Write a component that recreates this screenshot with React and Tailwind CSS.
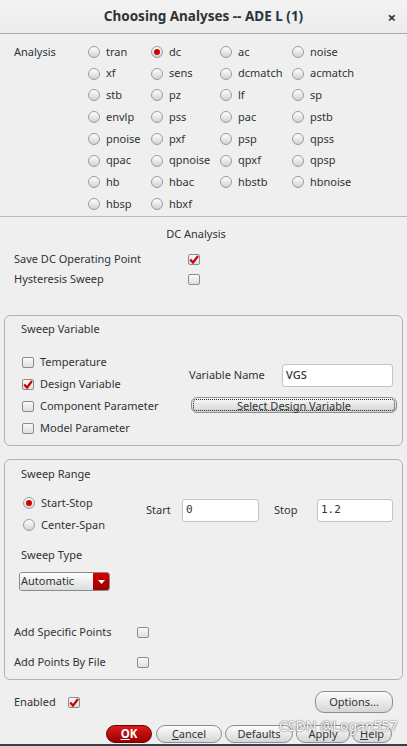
import React from 'react';

const analyses = [
  ['tran', 'dc', 'ac', 'noise'],
  ['xf', 'sens', 'dcmatch', 'acmatch'],
  ['stb', 'pz', 'lf', 'sp'],
  ['envlp', 'pss', 'pac', 'pstb'],
  ['pnoise', 'pxf', 'psp', 'qpss'],
  ['qpac', 'qpnoise', 'qpxf', 'qpsp'],
  ['hb', 'hbac', 'hbstb', 'hbnoise'],
  ['hbsp', 'hbxf', null, null],
];

const Radio = ({ checked }) => (
  <span className="w-[12px] h-[12px] rounded-full border border-[#9c9c9c] bg-linear-to-b from-white to-[#d2d2d2] flex items-center justify-center shrink-0">
    {checked && <span className="w-[6px] h-[6px] rounded-full bg-[#d40000]" />}
  </span>
);

const Check = ({ checked }) => (
  <span className="w-[12px] h-[11px] rounded-[2px] border border-[#8c8c8c] bg-linear-to-b from-[#fafafa] to-[#dedede] flex items-center justify-center shrink-0">
    {checked && (
      <svg width="10" height="9" viewBox="0 0 10 9">
        <path d="M1.2 4.6 L4 7.6 L9 1" fill="none" stroke="#cc0000" strokeWidth="2.2" />
      </svg>
    )}
  </span>
);

const Btn = ({ children, className = '' }) => (
  <div className={'flex items-center justify-center rounded-[9px] border border-[#8e8e8e] bg-linear-to-b from-[#fdfdfd] to-[#d6d6d6] text-[11px] text-[#2e3436] ' + className}>
    {children}
  </div>
);

const Field = ({ value, className = '', mono }) => (
  <div className={'h-[23px] bg-white border border-[#c4c4c4] rounded-[3px] flex items-center px-[3px] ' + (mono ? "font-['DejaVu_Sans_Mono',monospace] text-[11px] " : 'font-medium ') + className}>
    {value}
  </div>
);

export default function App() {
  return (
    <div className="w-[407px] h-[746px] bg-[#efefef] flex flex-col text-[11px] text-[#2e3436] overflow-hidden relative font-['Noto_Sans',sans-serif]">
      {/* title bar */}
      <div className="h-[34px] shrink-0 border-b border-[#adadad] bg-linear-to-b from-[#f4f4f4] to-[#ebebeb] flex items-center justify-center relative">
        <span className="text-[13.5px] font-bold text-[#2e3436]">Choosing Analyses -- ADE L (1)</span>
        <span className="absolute right-[11px] top-[6px] text-[15px] font-bold">×</span>
      </div>

      {/* analysis grid */}
      <div className="flex pt-[7px] pb-px">
        <div className="w-[88px] pl-[14px] h-[21.75px] flex items-center shrink-0">Analysis</div>
        <div className="grid grid-cols-[63px_69px_72px_1fr]">
          {analyses.flat().map((a, i) => (
            <div key={i} className="h-[21.75px] flex items-center gap-[6px]">
              {a && (
                <>
                  <Radio checked={a === 'dc'} />
                  <span>{a}</span>
                </>
              )}
            </div>
          ))}
        </div>
      </div>
      <div className="h-px bg-[#b9b9b9] shrink-0" />

      {/* DC analysis */}
      <div className="mt-[7px] h-[20px] flex items-center justify-center pr-[15px]">DC Analysis</div>
      <div className="mt-[5px] h-[20px] flex items-center pl-[14px]">
        <span className="w-[174px]">Save DC Operating Point</span>
        <Check checked />
      </div>
      <div className="h-[20px] flex items-center pl-[14px]">
        <span className="w-[174px]">Hysteresis Sweep</span>
        <Check />
      </div>

      {/* sweep variable */}
      <div className="mt-[26px] mx-[4px] h-[131px] shrink-0 border border-[#b3b3b3] rounded-[6px] flex flex-col">
        <div className="mt-[3px] h-[20px] flex items-center pl-[16px]">Sweep Variable</div>
        <div className="mt-[12px] flex">
          <div className="w-[184px] pl-[17px] flex flex-col">
            {[
              ['Temperature', false],
              ['Design Variable', true],
              ['Component Parameter', false],
              ['Model Parameter', false],
            ].map(([t, c]) => (
              <div key={t} className="h-[22px] flex items-center gap-[6px]">
                <Check checked={c} />
                <span>{t}</span>
              </div>
            ))}
          </div>
          <div className="pt-[13px] flex flex-col">
            <div className="flex items-center h-[23px]">
              <span className="w-[93px]">Variable Name</span>
              <Field value="VGS" className="w-[111px]" />
            </div>
            <div className="mt-[10px] ml-[2px] w-[206px] h-[16px] rounded-[6px] border border-[#8e8e8e] bg-linear-to-b from-[#fbfbfb] to-[#d3d3d3] p-px">
              <div className="w-full h-full border border-dotted border-[#222] rounded-[3px] flex items-center justify-center leading-none">
                Select Design Variable
              </div>
            </div>
          </div>
        </div>
      </div>

      {/* sweep range */}
      <div className="mt-[13px] mx-[4px] h-[221px] shrink-0 border border-[#b3b3b3] rounded-[6px] flex flex-col">
        <div className="mt-[4px] h-[20px] flex items-center pl-[16px]">Sweep Range</div>
        <div className="mt-[8px] flex">
          <div className="w-[141px] pl-[18px] flex flex-col">
            <div className="h-[22px] flex items-center gap-[6px]">
              <Radio checked />
              <span>Start-Stop</span>
            </div>
            <div className="h-[22px] flex items-center gap-[6px]">
              <Radio />
              <span>Center-Span</span>
            </div>
          </div>
          <div className="pt-[7px] flex items-start">
            <div className="h-[23px] flex items-center">
              <span className="w-[36px]">Start</span>
              <Field value="0" mono className="w-[77px]" />
              <span className="ml-[15px] w-[43px]">Stop</span>
              <Field value="1.2" mono className="w-[76px]" />
            </div>
          </div>
        </div>
        <div className="mt-[9px] h-[20px] flex items-center pl-[16px]">Sweep Type</div>
        <div className="mt-[7px] ml-[14px] w-[91px] h-[19px] rounded-[3px] border border-[#8a8a8a] flex overflow-hidden">
          <div className="flex-1 bg-linear-to-b from-white to-[#dcdcdc] flex items-center pl-[1px]">Automatic</div>
          <div className="w-[16px] bg-linear-to-b from-[#d50000] to-[#980000] flex items-center justify-center">
            <svg width="7" height="4" viewBox="0 0 7 4">
              <path d="M0 0 H7 L3.5 4 Z" fill="#fff" />
            </svg>
          </div>
        </div>
        <div className="mt-[31px] h-[20px] flex items-center pl-[9px]">
          <span className="w-[123px]">Add Specific Points</span>
          <Check />
        </div>
        <div className="mt-[10px] h-[20px] flex items-center pl-[9px]">
          <span className="w-[123px]">Add Points By File</span>
          <Check />
        </div>
      </div>

      {/* enabled + options */}
      <div className="mt-[11px] h-[22px] flex items-center pl-[14px] pr-[14px]">
        <span className="w-[54px] pt-px">Enabled</span>
        <Check checked />
        <div className="flex-1" />
        <Btn className="w-[78px] h-[22px]">Options...</Btn>
      </div>

      {/* dialog buttons */}
      <div className="mt-[12px] h-[18px] shrink-0 flex justify-end pr-[15px]">
        <div className="w-[46px] h-[18px] rounded-[9px] border border-[#6e0000] bg-linear-to-b from-[#dc1a1a] to-[#9a0000] flex items-center justify-center text-white font-bold text-[11.5px]">
          <span><span className="underline">O</span>K</span>
        </div>
        <Btn className="ml-[4px] w-[66px] h-[18px]"><span><span className="underline">C</span>ancel</span></Btn>
        <Btn className="ml-[3px] w-[68px] h-[18px]">Defaults</Btn>
        <Btn className="ml-[3px] w-[54px] h-[18px]">Apply</Btn>
        <Btn className="ml-[2px] w-[40px] h-[18px]"><span><span className="underline">H</span>elp</span></Btn>
      </div>
      <div className="mt-[1px] flex-1 bg-[#34414b]" />

      {/* watermark */}
      <div className="absolute left-[279px] top-[715px] text-[14px] text-white [text-shadow:0_0_1px_#555,0_0_2px_#777] pointer-events-none">
        CSDN @Logan557
      </div>
    </div>
  );
}
